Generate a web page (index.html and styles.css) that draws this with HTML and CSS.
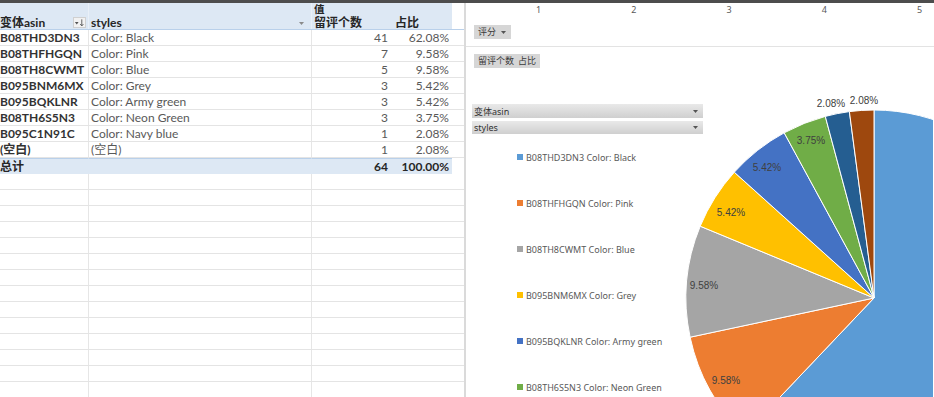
FILE: index.html
```html
<!DOCTYPE html>
<html lang="zh">
<head>
<meta charset="utf-8">
<title>数据透视表</title>
<link rel="stylesheet" href="styles.css">
</head>
<body>
<div class="topstrip"></div>
<div class="main">
  <div class="sheet">
    <div class="row hdr1">
      <span class="cell ca"></span><span class="cell cb"></span><span class="cell cc b">值</span><span class="cell cd"></span><span class="cell ce"></span>
    </div>
    <div class="row hdr2">
      <span class="cell ca b">变体asin<span class="fbtn"><svg width="12" height="10" viewBox="0 0 12 10"><path d="M1 4h4l-2 2.5z" fill="#555"/><path d="M8.5 1v7M6.8 6.2l1.7 2 1.7-2" stroke="#555" stroke-width="1" fill="none"/></svg></span></span>
      <span class="cell cb b">styles<span class="fdrop"><svg width="7" height="5" viewBox="0 0 7 5"><path d="M1 1h5l-2.5 3z" fill="#8a8a8a"/></svg></span></span>
      <span class="cell cc b">留评个数</span><span class="cell cd b lft">占比</span><span class="cell ce"></span>
    </div>
    <div class="row"><span class="cell ca k">B08THD3DN3</span><span class="cell cb">Color: Black</span><span class="cell cc n">41</span><span class="cell cd n">62.08%</span><span class="cell ce"></span></div>
    <div class="row"><span class="cell ca k">B08THFHGQN</span><span class="cell cb">Color: Pink</span><span class="cell cc n">7</span><span class="cell cd n">9.58%</span><span class="cell ce"></span></div>
    <div class="row"><span class="cell ca k">B08TH8CWMT</span><span class="cell cb">Color: Blue</span><span class="cell cc n">5</span><span class="cell cd n">9.58%</span><span class="cell ce"></span></div>
    <div class="row"><span class="cell ca k">B095BNM6MX</span><span class="cell cb">Color: Grey</span><span class="cell cc n">3</span><span class="cell cd n">5.42%</span><span class="cell ce"></span></div>
    <div class="row"><span class="cell ca k">B095BQKLNR</span><span class="cell cb">Color: Army green</span><span class="cell cc n">3</span><span class="cell cd n">5.42%</span><span class="cell ce"></span></div>
    <div class="row"><span class="cell ca k">B08TH6S5N3</span><span class="cell cb">Color: Neon Green</span><span class="cell cc n">3</span><span class="cell cd n">3.75%</span><span class="cell ce"></span></div>
    <div class="row"><span class="cell ca k">B095C1N91C</span><span class="cell cb">Color: Navy blue</span><span class="cell cc n">1</span><span class="cell cd n">2.08%</span><span class="cell ce"></span></div>
    <div class="row"><span class="cell ca k">(空白)</span><span class="cell cb">(空白)</span><span class="cell cc n">1</span><span class="cell cd n">2.08%</span><span class="cell ce"></span></div>
    <div class="row total"><span class="cell ca b">总计</span><span class="cell cb"></span><span class="cell cc n b">64</span><span class="cell cd n b">100.00%</span><span class="cell ce"></span></div>
    <div class="row"><span class="cell ca"></span><span class="cell cb"></span><span class="cell cc"></span><span class="cell cd"></span><span class="cell ce"></span></div>
    <div class="row"><span class="cell ca"></span><span class="cell cb"></span><span class="cell cc"></span><span class="cell cd"></span><span class="cell ce"></span></div>
    <div class="row"><span class="cell ca"></span><span class="cell cb"></span><span class="cell cc"></span><span class="cell cd"></span><span class="cell ce"></span></div>
    <div class="row"><span class="cell ca"></span><span class="cell cb"></span><span class="cell cc"></span><span class="cell cd"></span><span class="cell ce"></span></div>
    <div class="row"><span class="cell ca"></span><span class="cell cb"></span><span class="cell cc"></span><span class="cell cd"></span><span class="cell ce"></span></div>
    <div class="row"><span class="cell ca"></span><span class="cell cb"></span><span class="cell cc"></span><span class="cell cd"></span><span class="cell ce"></span></div>
    <div class="row"><span class="cell ca"></span><span class="cell cb"></span><span class="cell cc"></span><span class="cell cd"></span><span class="cell ce"></span></div>
    <div class="row"><span class="cell ca"></span><span class="cell cb"></span><span class="cell cc"></span><span class="cell cd"></span><span class="cell ce"></span></div>
    <div class="row"><span class="cell ca"></span><span class="cell cb"></span><span class="cell cc"></span><span class="cell cd"></span><span class="cell ce"></span></div>
    <div class="row"><span class="cell ca"></span><span class="cell cb"></span><span class="cell cc"></span><span class="cell cd"></span><span class="cell ce"></span></div>
    <div class="row"><span class="cell ca"></span><span class="cell cb"></span><span class="cell cc"></span><span class="cell cd"></span><span class="cell ce"></span></div>
    <div class="row"><span class="cell ca"></span><span class="cell cb"></span><span class="cell cc"></span><span class="cell cd"></span><span class="cell ce"></span></div>
    <div class="row"><span class="cell ca"></span><span class="cell cb"></span><span class="cell cc"></span><span class="cell cd"></span><span class="cell ce"></span></div>
    <div class="row"><span class="cell ca"></span><span class="cell cb"></span><span class="cell cc"></span><span class="cell cd"></span><span class="cell ce"></span></div>
  </div>

  <div class="pane">
    <svg class="pie" viewBox="0 0 467 394" width="467" height="394">
      <g stroke="#fff" stroke-width="1">
        <path d="M408 295 L408 107 A188 188 0 1 1 278.6 431.4 Z" fill="#5b9bd5"/>
        <path d="M408 295 L278.6 431.4 A188 188 0 0 1 224.1 334.2 Z" fill="#ed7d31"/>
        <path d="M408 295 L224.1 334.2 A188 188 0 0 1 234.2 223.2 Z" fill="#a5a5a5"/>
        <path d="M408 295 L234.2 223.2 A188 188 0 0 1 268.3 169.2 Z" fill="#ffc000"/>
        <path d="M408 295 L268.3 169.2 A188 188 0 0 1 318.2 129.8 Z" fill="#4472c4"/>
        <path d="M408 295 L318.2 129.8 A188 188 0 0 1 359.3 113.4 Z" fill="#70ad47"/>
        <path d="M408 295 L359.3 113.4 A188 188 0 0 1 383.4 108.6 Z" fill="#255e91"/>
        <path d="M408 295 L383.4 108.6 A188 188 0 0 1 408 107 Z" fill="#9e480e"/>
      </g>
      <g class="plabel">
        <text x="365" y="100">2.08%</text>
        <text x="398" y="97">2.08%</text>
        <text x="345" y="137">3.75%</text>
        <text x="301" y="164">5.42%</text>
        <text x="265" y="209">5.42%</text>
        <text x="238" y="282">9.58%</text>
        <text x="260" y="377">9.58%</text>
      </g>
    </svg>
    <div class="axis"><span>1</span><span>2</span><span>3</span><span>4</span><span>5</span></div>
    <div class="filterzone"><span class="chip">评分 <svg width="7" height="5" viewBox="0 0 7 5"><path d="M1 1h5l-2.5 3z" fill="#555"/></svg></span></div>
    <div class="valuezone"><span class="chip">留评个数&nbsp; 占比</span></div>
    <div class="drops">
      <div class="drop">变体asin<svg width="7" height="5" viewBox="0 0 7 5"><path d="M1 1h5l-2.5 3z" fill="#555"/></svg></div>
      <div class="drop">styles<svg width="7" height="5" viewBox="0 0 7 5"><path d="M1 1h5l-2.5 3z" fill="#555"/></svg></div>
    </div>
    <ul class="legend">
      <li><i class="sw s1"></i>B08THD3DN3 Color: Black</li>
      <li><i class="sw s2"></i>B08THFHGQN Color: Pink</li>
      <li><i class="sw s3"></i>B08TH8CWMT Color: Blue</li>
      <li><i class="sw s4"></i>B095BNM6MX Color: Grey</li>
      <li><i class="sw s5"></i>B095BQKLNR Color: Army green</li>
      <li><i class="sw s6"></i>B08TH6S5N3 Color: Neon Green</li>
    </ul>
  </div>
</div>
</body>
</html>
```
FILE: styles.css
```css
* { box-sizing: border-box; }
html, body { margin: 0; padding: 0; }
body {
  width: 934px;
  height: 397px;
  overflow: hidden;
  background: #fff;
  font-family: Lato, "Noto Sans CJK SC", sans-serif;
}
.topstrip {
  height: 3px;
  background: #4d4d4d;
}
.main {
  display: flex;
  height: 394px;
}
.sheet {
  width: 464px;
  flex: none;
  overflow: hidden;
}
.row {
  display: grid;
  grid-template-columns: 89px 223px 77px 63px 12px;
  height: 16px;
  border-bottom: 1px solid #e4e4e4;
  font-size: 12px;
  line-height: 15px;
  color: #595959;
}
.cell {
  display: block;
  white-space: nowrap;
  overflow: hidden;
  padding-left: 2px;
  position: relative;
}
.ca { border-right: 1px solid #e6e6e6; padding-left: 0; }
.cb { border-right: 1px solid #e6e6e6; }
.cc, .cd { padding-right: 1px; }
.cd { padding-right: 3px; }
.n { text-align: right; }
.lft { text-align: left; padding-left: 6px; }
.b { font-weight: 700; color: #262626; }
.k { font-weight: 700; color: #333; }
.hdr1 {
  height: 13px;
  line-height: 13px;
  font-size: 10.5px;
  border-bottom: none;
}
.hdr1 .cell, .hdr2 .cell { background: #dde8f4; border-right-color: #e9f0f8; }
.hdr1 .ce, .hdr2 .ce { background: #fff; }
.hdr2 {
  height: 14px;
  line-height: 12px;
  border-bottom: 1px solid #b9d0ea;
}
.hdr2 .cell { padding-top: 1px; }
.total { border-bottom: none; height: 16px; }
.total .cell { background: #dde8f4; border-top: 1px solid #b9d0ea; border-right-color: #dde8f4; }
.total .ce { background: #fff; border-top: none; }
.fbtn {
  position: absolute;
  left: 73px;
  top: 1px;
  width: 13px;
  height: 11px;
  background: #f2f2f2;
  border: 1px solid #d0d0d0;
  display: flex;
  align-items: center;
  justify-content: center;
}
.fbtn svg { display: block; }
.fdrop {
  position: absolute;
  right: 6px;
  top: 5px;
}
.fdrop svg { display: block; }

.pane {
  flex: 1;
  position: relative;
  border-left: 2px solid #dadada;
  overflow: hidden;
  display: flex;
  flex-direction: column;
  font-family: "Noto Sans", "Noto Sans CJK SC", sans-serif;
  font-size: 9px;
  color: #595959;
}
.pie {
  position: absolute;
  left: 0;
  top: 0;
}
.plabel text {
  font-family: "Liberation Sans", sans-serif;
  font-size: 10px;
  fill: #404040;
  text-anchor: middle;
  dominant-baseline: central;
}
.axis {
  display: grid;
  grid-template-columns: repeat(5, 95.25px);
  padding-left: 25px;
  height: 13px;
  line-height: 13px;
  text-align: center;
  position: relative;
}
.filterzone {
  padding: 9px 0 7px 8px;
  border-bottom: 1px solid #e3e3e3;
  position: relative;
}
.valuezone {
  padding: 7px 0 0 8px;
  position: relative;
}
.chip {
  display: inline-flex;
  align-items: center;
  gap: 4px;
  height: 14px;
  padding: 0 4px;
  background: #d6d6d6;
  color: #3a3a3a;
  font-family: "Noto Sans CJK SC", sans-serif;
  font-size: 9px;
  line-height: 14px;
}
.drops {
  margin: 36px 0 0 6px;
  width: 231px;
  display: flex;
  flex-direction: column;
  gap: 3px;
  position: relative;
}
.drop {
  height: 14px;
  display: flex;
  align-items: center;
  justify-content: space-between;
  padding: 0 4px 0 2px;
  background: linear-gradient(#e9e9e9, #cfcfcf);
  color: #333;
  font-family: "Noto Sans", "Noto Sans CJK SC", sans-serif;
  font-size: 9px;
}
.drop + .drop { height: 13px; }
.legend {
  list-style: none;
  margin: 0;
  padding: 0 0 0 51px;
  position: relative;
}
.legend li {
  height: 46px;
  display: flex;
  align-items: center;
  gap: 3px;
  font-size: 9px;
  color: #595959;
  white-space: nowrap;
}
.sw { width: 6px; height: 6px; display: block; }
.s1 { background: #5b9bd5; }
.s2 { background: #ed7d31; }
.s3 { background: #a5a5a5; }
.s4 { background: #ffc000; }
.s5 { background: #4472c4; }
.s6 { background: #70ad47; }
```
